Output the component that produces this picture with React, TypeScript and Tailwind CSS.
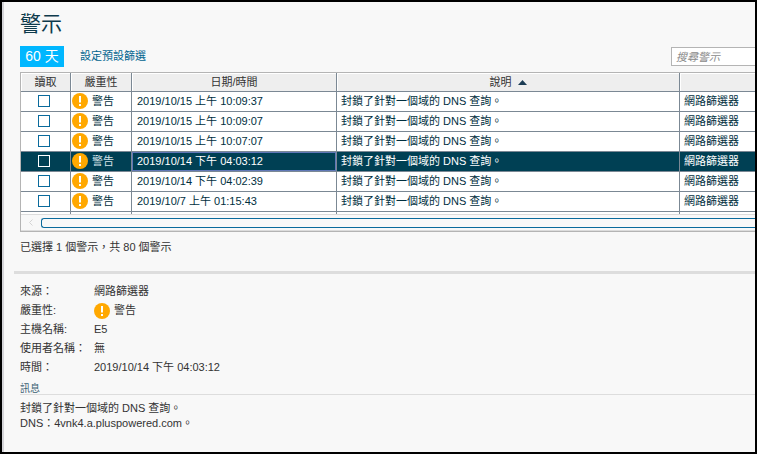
import React, { useState } from 'react';

interface Alert {
  id: number;
  severity: string;
  time: string;
  description: string;
  source: string;
}

const DESCRIPTION = '封鎖了針對一個域的 DNS 查詢。';

const alerts: Alert[] = [
  { id: 1, severity: '警告', time: '2019/10/15 上午 10:09:37', description: DESCRIPTION, source: '網路篩選器' },
  { id: 2, severity: '警告', time: '2019/10/15 上午 10:09:07', description: DESCRIPTION, source: '網路篩選器' },
  { id: 3, severity: '警告', time: '2019/10/15 上午 10:07:07', description: DESCRIPTION, source: '網路篩選器' },
  { id: 4, severity: '警告', time: '2019/10/14 下午 04:03:12', description: DESCRIPTION, source: '網路篩選器' },
  { id: 5, severity: '警告', time: '2019/10/14 下午 04:02:39', description: DESCRIPTION, source: '網路篩選器' },
  { id: 6, severity: '警告', time: '2019/10/7 上午 01:15:43', description: DESCRIPTION, source: '網路篩選器' },
];

function WarningIcon() {
  return (
    <svg className="h-4 w-4 shrink-0" viewBox="0 0 16 16" aria-hidden="true">
      <circle cx="8" cy="8" r="8" fill="#ffa800" />
      <path d="M7 3h2v6.5H7zM7 11h2v2H7z" fill="#fff" />
    </svg>
  );
}

function HeaderCell({ children }: { children?: React.ReactNode }) {
  return (
    <th
      scope="col"
      className="h-[19px] border-r border-b border-[#7b8894] bg-[#eeeeee] p-0 text-center font-normal text-[#333333] shadow-[inset_1px_1px_0_#ffffff] last:border-r-0"
    >
      {children}
    </th>
  );
}

interface AlertRowProps {
  alert: Alert;
  selected: boolean;
  onSelect: () => void;
}

function AlertRow({ alert, selected, onSelect }: AlertRowProps) {
  const cell = 'h-5 border-r border-b border-[#7b8894] p-0 last:border-r-0';

  return (
    <tr
      onClick={onSelect}
      aria-selected={selected}
      className={selected ? 'bg-[#004054] text-white' : 'bg-white text-[#002f3e]'}
    >
      <td className={`${cell} pr-1 pb-0.5`}>
        <input
          type="checkbox"
          aria-label={`讀取 ${alert.time}`}
          className={`mx-auto block h-3 w-3 appearance-none border checked:bg-[#0a6a9c] ${
            selected ? 'border-white' : 'border-[#0a6a9c]'
          }`}
        />
      </td>
      <td className={`${cell} pb-px`}>
        <div className="flex items-center gap-1 pl-px">
          <WarningIcon />
          <span className={selected ? 'text-[#d5e3e8]' : ''}>{alert.severity}</span>
        </div>
      </td>
      <td className={`${cell} pl-[5px] ${selected ? 'shadow-[inset_0_0_0_1px_#6078b8]' : ''}`}>
        {alert.time}
      </td>
      <td className={`${cell} pl-1`}>{alert.description}</td>
      <td className={`${cell} pl-1`}>{alert.source}</td>
    </tr>
  );
}

export default function App() {
  const [selectedId, setSelectedId] = useState(4);
  const current = alerts.find((a) => a.id === selectedId) ?? alerts[0];

  return (
    <div className="min-h-screen border-2 border-black bg-[#f8f8f8] font-['Liberation_Sans','Noto_Sans_CJK_TC',sans-serif] text-[11px] leading-[15px] text-[#333333]">
      <div className="min-h-[450px] border-l-2 border-[#d4d4d8]">
        <section className="pt-2 pl-4">
          <h1 className="text-[21px] leading-7 text-[#0d3a4c]">警示</h1>

          <div className="mt-2 flex h-[21px] items-center">
            <button type="button" className="h-[21px] w-11 bg-[#00b7ff] text-[14px] leading-[21px] whitespace-nowrap text-white">
              60 天
            </button>
            <a href="#filter" className="ml-4 text-[#00648f]">
              設定預設篩選
            </a>
            <input
              type="search"
              aria-label="搜尋警示"
              placeholder="搜尋警示"
              className="ml-auto h-[19px] w-[84px] border border-r-0 border-[#b4b4b4] bg-white pl-1 outline-none placeholder:text-[#8a8a8a] placeholder:italic"
            />
          </div>

          <div className="mt-[5px] border border-r-0 border-[#b4b4b4]">
            <table className="w-full table-fixed border-separate border-spacing-0 whitespace-nowrap">
              <colgroup>
                <col className="w-[50px]" />
                <col className="w-[61px]" />
                <col className="w-[205px]" />
                <col />
                <col className="w-[75px]" />
              </colgroup>
              <thead>
                <tr>
                  <HeaderCell>讀取</HeaderCell>
                  <HeaderCell>嚴重性</HeaderCell>
                  <HeaderCell>日期/時間</HeaderCell>
                  <HeaderCell>
                    <span className="inline-flex items-center gap-1.5">
                      說明
                      <svg className="h-[5px] w-[9px]" viewBox="0 0 9 5" aria-hidden="true">
                        <path d="M4.5 0L9 5H0z" fill="#1c3c54" />
                      </svg>
                    </span>
                  </HeaderCell>
                  <HeaderCell />
                </tr>
              </thead>
              <tbody>
                {alerts.map((alert) => (
                  <AlertRow
                    key={alert.id}
                    alert={alert}
                    selected={alert.id === selectedId}
                    onSelect={() => setSelectedId(alert.id)}
                  />
                ))}
                {/* Column lines carry on down to the scrollbar */}
                <tr className="bg-white" aria-hidden="true">
                  {[0, 1, 2, 3, 4].map((i) => (
                    <td key={i} className="h-0.5 border-r border-[#7b8894] p-0 last:border-r-0" />
                  ))}
                </tr>
              </tbody>
            </table>

            {/* Horizontal scrollbar */}
            <div className="flex h-[17px] items-center border-y border-[#dcdcdc] bg-[#f8f8f8]">
              <button type="button" aria-label="向左捲動" className="flex w-5 justify-center">
                <svg className="h-[7px] w-1" viewBox="0 0 4 7" fill="none" stroke="#d4d4d4" aria-hidden="true">
                  <path d="M3.5 0.5l-3 3 3 3" />
                </svg>
              </button>
              <div className="h-2.5 flex-1 rounded-l-[3px] border border-r-0 border-[#0a6a9c] bg-[#f8f8f8]" />
            </div>
          </div>

          <p className="mt-2">已選擇 1 個警示，共 80 個警示</p>
        </section>

        <section className="mt-4 ml-2.5 border-t-[3px] border-[#dddddd] pt-2 pl-1.5">
          <dl className="grid grid-cols-[74px_1fr] leading-[19px]">
            <dt>來源：</dt>
            <dd>{current.source}</dd>
            <dt>嚴重性:</dt>
            <dd className="flex items-center gap-1">
              <WarningIcon />
              {current.severity}
            </dd>
            <dt>主機名稱:</dt>
            <dd>E5</dd>
            <dt className="whitespace-nowrap">使用者名稱：</dt>
            <dd>無</dd>
            <dt>時間：</dt>
            <dd>{current.time}</dd>
          </dl>

          <h2 className="mt-1.5 h-3 border-b border-[#dddddd] text-[10px] leading-3 text-[#3a6072]">訊息</h2>
          <div className="mt-1.5">
            <p>{current.description}</p>
            <p>DNS：4vnk4.a.pluspowered.com。</p>
          </div>
        </section>
      </div>
    </div>
  );
}
